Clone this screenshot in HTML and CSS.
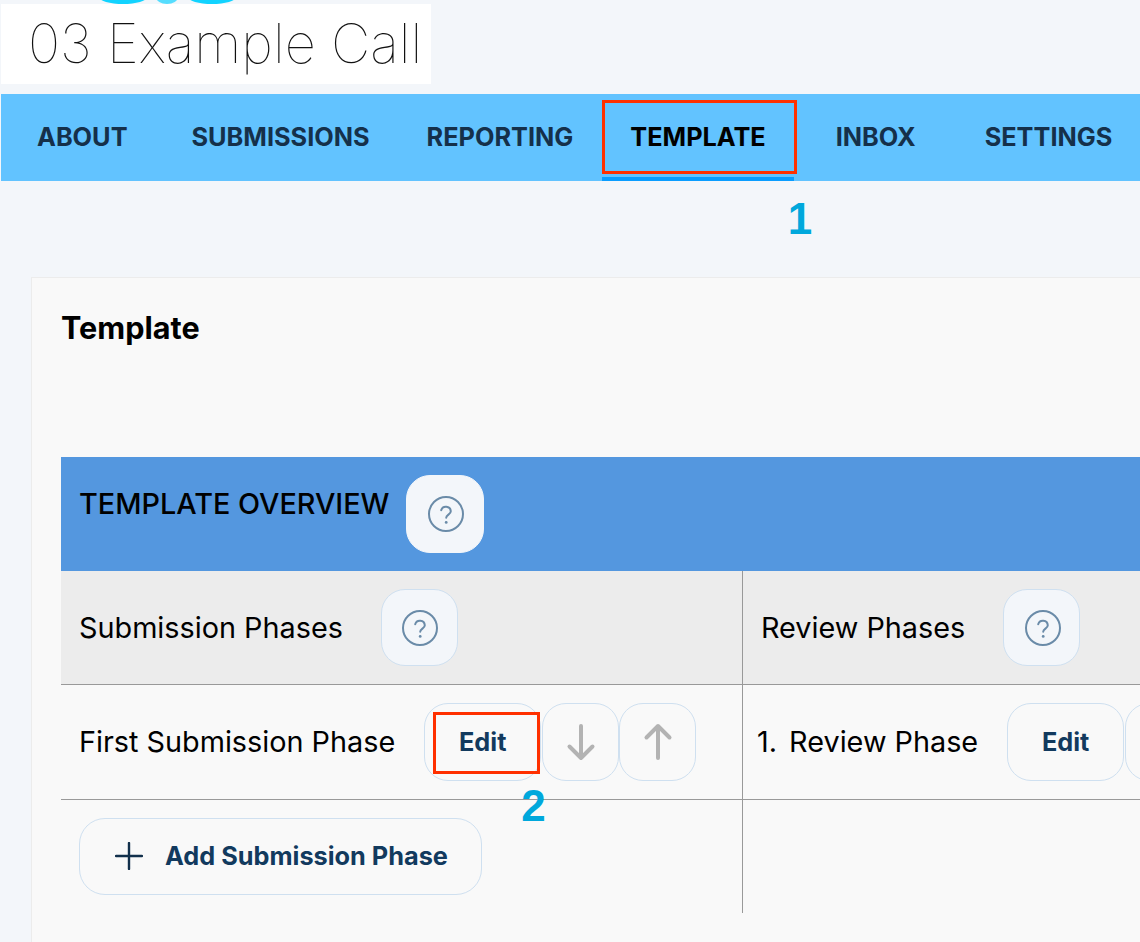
FILE: index.html
```html
<!DOCTYPE html>
<html lang="en">
<head>
<meta charset="utf-8">
<title>03 Example Call</title>
<link rel="stylesheet" href="styles.css">
</head>
<body>
<div class="logo-strip">
  <svg class="logo-frag" width="140" height="4" viewBox="0 0 140 4"><ellipse cx="23" cy="-3" rx="24" ry="7" fill="#12d3ff"/><ellipse cx="67" cy="-3" rx="11" ry="7" fill="#12d3ff" opacity=".7"/><ellipse cx="112" cy="-3" rx="24" ry="7" fill="#12d3ff"/></svg>
</div>
<div class="shell">
  <h1 class="title">03 Example Call</h1>
  <nav class="nav">
    <a class="nav-item nav-about">ABOUT</a>
    <a class="nav-item nav-sub">SUBMISSIONS</a>
    <a class="nav-item">REPORTING</a>
    <a class="nav-item nav-active">TEMPLATE<span class="mark mark-nav"></span><span class="num num-1">1</span></a>
    <a class="nav-item nav-inbox">INBOX</a>
    <a class="nav-item nav-settings">SETTINGS</a>
  </nav>
  <main class="main">
    <section class="card">
      <h2 class="card-title">Template</h2>
      <div class="overview">
        <div class="band">
          <span class="band-title">TEMPLATE OVERVIEW</span>
          <button class="btn btn-help btn-help-band">
            <svg class="q" width="38" height="38" viewBox="0 0 38 38"><circle cx="19" cy="19" r="17" fill="none" stroke="#6a8ba8" stroke-width="2"/><path d="M14.2 15.2a4.9 4.9 0 0 1 9.6 1c0 3.2-4.6 3.6-4.6 6.6" fill="none" stroke="#6a8ba8" stroke-width="2" stroke-linecap="round"/><circle cx="19.2" cy="27.4" r="1.4" fill="#6a8ba8"/></svg>
          </button>
        </div>
        <div class="grid">
          <div class="cell head left">
            <span class="label">Submission Phases</span>
            <button class="btn btn-help">
              <svg class="q" width="38" height="38" viewBox="0 0 38 38"><circle cx="19" cy="19" r="17" fill="none" stroke="#6a8ba8" stroke-width="2"/><path d="M14.2 15.2a4.9 4.9 0 0 1 9.6 1c0 3.2-4.6 3.6-4.6 6.6" fill="none" stroke="#6a8ba8" stroke-width="2" stroke-linecap="round"/><circle cx="19.2" cy="27.4" r="1.4" fill="#6a8ba8"/></svg>
            </button>
          </div>
          <div class="cell head right">
            <span class="label">Review Phases</span>
            <button class="btn btn-help">
              <svg class="q" width="38" height="38" viewBox="0 0 38 38"><circle cx="19" cy="19" r="17" fill="none" stroke="#6a8ba8" stroke-width="2"/><path d="M14.2 15.2a4.9 4.9 0 0 1 9.6 1c0 3.2-4.6 3.6-4.6 6.6" fill="none" stroke="#6a8ba8" stroke-width="2" stroke-linecap="round"/><circle cx="19.2" cy="27.4" r="1.4" fill="#6a8ba8"/></svg>
            </button>
          </div>
          <div class="cell left">
            <span class="label">First Submission Phase</span>
            <button class="btn btn-edit">Edit<span class="mark mark-edit"></span><span class="num num-2">2</span></button>
            <button class="btn btn-arrow">
              <svg width="30" height="38" viewBox="0 0 30 38"><path d="M15 3v32M3.500 23.500 15 35l11.500-11.500" fill="none" stroke="#b3b3b3" stroke-width="4" stroke-linecap="round" stroke-linejoin="round"/></svg>
            </button>
            <button class="btn btn-arrow">
              <svg width="30" height="38" viewBox="0 0 30 38"><path d="M15 35V3M3.500 14.500 15 3l11.500 11.500" fill="none" stroke="#b3b3b3" stroke-width="4" stroke-linecap="round" stroke-linejoin="round"/></svg>
            </button>
          </div>
          <div class="cell right right-tight">
            <span class="label"><span class="phase-no">1.</span> Review Phase</span>
            <button class="btn btn-edit">Edit</button>
            <button class="btn btn-arrow"></button>
          </div>
          <div class="cell foot left">
            <button class="btn btn-add">
              <svg width="28" height="28" viewBox="0 0 28 28"><path d="M14 1v26M1 14h26" fill="none" stroke="#12304c" stroke-width="2.4" stroke-linecap="round"/></svg>
              <span>Add Submission Phase</span>
            </button>
          </div>
          <div class="cell foot right"></div>
        </div>
      </div>
    </section>
  </main>
</div>
</body>
</html>
```
FILE: styles.css
```css
* { box-sizing: border-box; }
html, body { margin: 0; height: 942px; overflow: hidden; }
body {
  background: #f3f6fa;
  font-family: "Inter", "Liberation Sans", sans-serif;
  color: #000;
}
.logo-strip { height: 4px; padding-left: 100px; overflow: hidden; }
.logo-frag { display: block; }
.shell { padding-left: 1px; }
.title {
  width: 430px;
  height: 80px;
  margin: 0 0 10px;
  padding-left: 27px;
  background: #fff;
  font-size: 54.3px;
  font-weight: 100;
  line-height: 78px;
  color: #111;
  white-space: nowrap;
}
.nav {
  display: flex;
  height: 87px;
  background: #62c3ff;
  font-size: 25.3px;
  font-weight: 700;
  color: #15304a;
}
.nav-item {
  position: relative;
  display: flex;
  align-items: center;
  height: 87px;
  padding: 0 28.5px 2px;
  white-space: nowrap;
}
.nav-about { margin-left: 7.5px; }
.nav-sub { margin-left: 7px; }
.nav-active { color: #000; border-bottom: 4px solid #0a9dff; padding-top: 2px; padding-bottom: 0; }
.nav-inbox { margin-left: 13px; }
.nav-settings { margin-left: 12px; }
.mark { position: absolute; border: 3px solid #ff3000; pointer-events: none; }
.mark-nav { left: 0; top: 6px; width: 195px; height: 74px; }
.mark-edit { left: 8px; top: 8px; width: 107px; height: 62px; }
.num { position: absolute; color: #00a8dc; font-family: "Liberation Sans", sans-serif; font-size: 44px; font-weight: 700; line-height: 44px; }
.num-1 { left: 186px; top: 103px; }
.num-2 { left: 96px; top: 80px; }
.main { padding: 96px 0 0 30px; }
.card {
  height: 700px;
  padding: 32px 0 0 29px;
  background: #f9f9f9;
  border-top: 1px solid #ececec;
  border-left: 1px solid #ececec;
}
.card-title { margin: 0 0 111px; font-size: 30.6px; font-weight: 700; line-height: 36px; }
.band {
  display: flex;
  align-items: flex-start;
  height: 114px;
  padding: 18px 0 0 18px;
  background: #5497df;
}
.band-title { margin-right: 17px; font-size: 28.8px; font-weight: 500; line-height: 58px; }
.grid { display: grid; grid-template-columns: 682px minmax(0, 1fr); grid-template-rows: 114px 115px 113px; }
.cell { display: flex; align-items: center; border-bottom: 1px solid #999; }
.cell.left { padding-left: 18px; border-right: 1px solid #999; }
.cell.right { padding-left: 18px; min-width: 0; overflow: hidden; }
.cell.right-tight { padding-left: 14px; }
.cell.head { background: #ececec; }
.cell.foot { border-bottom: 0; align-items: flex-start; padding-top: 18px; }
.label { font-size: 28.8px; line-height: 36px; white-space: nowrap; margin-right: 29px; }
.head .label { margin-right: 38px; }
.phase-no { margin-right: 4px; }
.btn {
  position: relative;
  display: flex;
  align-items: center;
  justify-content: center;
  flex: none;
  height: 77px;
  padding: 0;
  background: transparent;
  border: 1px solid #cfe0f0;
  border-radius: 24px;
  font: 700 25.3px "Inter", "Liberation Sans", sans-serif;
  color: #123a5e;
}
.q { margin-left: 2px; }
.btn-help { width: 77px; background: #f3f6fa; }
.btn-help-band { width: 78px; height: 78px; border-color: #f3f6fa; }
.btn-edit { width: 117px; height: 78px; margin-right: 1px; padding-bottom: 2px; }
.btn-arrow { width: 77px; height: 78px; }
.btn-add { width: 403px; justify-content: flex-start; gap: 22px; padding: 0 0 2px 35px; border-radius: 26px; }
```
